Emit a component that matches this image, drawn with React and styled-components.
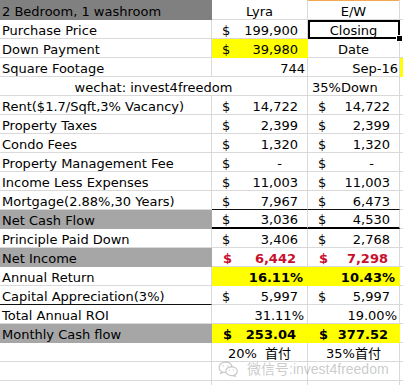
import React from 'react'
import styled, { createGlobalStyle } from 'styled-components'

const GRID = '#d9d9d9'
const YELLOW = '#ffff00'
const GREY = '#a6a6a6'
const DARK = '#808080'
const RED = '#c8102e'

const GlobalStyle = createGlobalStyle`
  html, body {
    margin: 0;
    padding: 0;
    background: #fff;
  }
  body {
    font-family: "DejaVu Sans", Verdana, "Noto Sans CJK SC", sans-serif;
  }
`

const Sheet = styled.div`
    position: relative;
    display: grid;
    grid-template-columns: 212px 96px 92px 3px;
    grid-template-rows: 20px;
    grid-auto-rows: 19px;
    width: 403px;
    height: 385px;
    overflow: hidden;
    font-size: 13px;
    color: #000;
`

const justify = {
    left: 'flex-start',
    center: 'center',
    right: 'flex-end',
    split: 'space-between',
}

const Cell = styled.div`
    position: relative;
    box-sizing: border-box;
    display: flex;
    align-items: flex-end;
    justify-content: ${p => justify[p.$align || 'right']};
    grid-column: span ${p => p.$span || 1};
    padding: 0 ${p => p.$pr ?? 2}px 0 ${p => p.$pl ?? 2}px;
    line-height: 14px;
    white-space: nowrap;
    background: ${p => p.$fill || '#fff'};
    border-right: 1px solid ${p => p.$fill || GRID};
    border-bottom: ${p =>
        p.$rule === 'thick' ? '2px solid #000'
        : p.$rule === 'thin' ? '1px solid #111'
        : `1px solid ${p.$fill || GRID}`};
    font-weight: ${p => (p.$bold ? 700 : 400)};
    color: ${p => (p.$red ? RED : '#000')};
`

const HeadCell = styled(Cell)`
    box-shadow: inset 0 1px 0 #f3a94f;
`

const Selected = styled(Cell)`
    &::after {
        content: '';
        position: absolute;
        top: 0;
        left: 0;
        right: -1px;
        bottom: -1px;
        border: 2px solid #000;
    }
    &::before {
        content: '';
        position: absolute;
        right: -4px;
        bottom: -4px;
        width: 5px;
        height: 5px;
        background: #000;
        border: 1px solid #fff;
        z-index: 1;
    }
`

const Edge = styled.div`
    box-sizing: border-box;
    background: ${p => p.$fill || '#fff'};
    border-bottom: 1px solid ${p => p.$fill || GRID};
`

const Amount = styled.span`
    padding-right: ${p => (p.$dash ? 16 : 0)}px;
`

const Money = ({ value, bold, ...rest }) => (
    <Cell $align="split" $pl={bold ? 11 : 10} $pr={bold ? 11 : 9} $bold={bold} {...rest}>
        <span>$</span>
        <Amount $dash={value === '-'}>{value}</Amount>
    </Cell>
)

const Line = ({ label, fill, rule, edge, children }) => (
    <>
        <Cell $align="left" $fill={fill} $rule={rule}>{label}</Cell>
        {children}
        <Edge $fill={edge} />
    </>
)

const Watermark = styled.div`
    position: absolute;
    left: 218px;
    top: 361px;
    display: flex;
    align-items: center;
    gap: 8px;
    font-family: "Liberation Sans", "Noto Sans CJK SC", sans-serif;
    font-size: 14px;
    line-height: 16px;
    color: rgba(120, 120, 120, 0.4);
    pointer-events: none;
`

const WeChatLogo = () => (
    <svg width="21" height="16" viewBox="0 0 21 16" fill="none" stroke="currentColor" strokeWidth="1.2">
        <path d="M14 5.6C13.4 3.1 10.8 1.2 7.6 1.2 4 1.2 1 3.5 1 6.4c0 1.6.9 3 2.4 3.9L2.8 12.3l2.4-1.2c.8.2 1.5.3 2.3.3" />
        <path d="M13.6 5.8c-3.2 0-5.8 2-5.8 4.4s2.6 4.4 5.8 4.4c.6 0 1.2-.1 1.8-.2l1.9 1-.5-1.6c1.5-.8 2.5-2.1 2.5-3.6 0-2.4-2.5-4.4-5.7-4.4z" />
        <circle cx="5.2" cy="4.9" r="0.7" fill="currentColor" stroke="none" />
        <circle cx="9.8" cy="4.9" r="0.7" fill="currentColor" stroke="none" />
        <circle cx="11.7" cy="9.2" r="0.6" fill="currentColor" stroke="none" />
        <circle cx="15.5" cy="9.2" r="0.6" fill="currentColor" stroke="none" />
    </svg>
)

const App = () => {
    return (
        <Sheet>
            <GlobalStyle />
            <Line label="2 Bedroom, 1 washroom" fill={DARK}>
                <Cell $align="center">Lyra</Cell>
                <HeadCell $align="center">E/W</HeadCell>
            </Line>
            <Line label="Purchase Price">
                <Money value="199,900" />
                <Selected $align="center">Closing</Selected>
            </Line>
            <Line label="Down Payment">
                <Money value="39,980" $fill={YELLOW} />
                <Cell $align="center">Date</Cell>
            </Line>
            <Line label="Square Footage" edge={YELLOW}>
                <Cell $pr={2}>744</Cell>
                <Cell $pr={1}>Sep-16</Cell>
            </Line>
            <>
                <Cell $align="center" $span={2}>wechat: invest4freedom</Cell>
                <Cell $align="left" $pl={4}>35%Down</Cell>
                <Edge />
            </>
            <Line label="Rent($1.7/Sqft,3% Vacancy)">
                <Money value="14,722" />
                <Money value="14,722" />
            </Line>
            <Line label="Property Taxes">
                <Money value="2,399" />
                <Money value="2,399" />
            </Line>
            <Line label="Condo Fees">
                <Money value="1,320" />
                <Money value="1,320" />
            </Line>
            <Line label="Property Management Fee">
                <Money value="-" />
                <Money value="-" />
            </Line>
            <Line label="Income Less Expenses">
                <Money value="11,003" />
                <Money value="11,003" />
            </Line>
            <Line label="Mortgage(2.88%,30 Years)">
                <Money value="7,967" $rule="thin" />
                <Money value="6,473" $rule="thin" />
            </Line>
            <Line label="Net Cash Flow" fill={GREY}>
                <Money value="3,036" $rule="thick" />
                <Money value="4,530" $rule="thick" />
            </Line>
            <Line label="Principle Paid Down">
                <Money value="3,406" />
                <Money value="2,768" />
            </Line>
            <Line label="Net Income" fill={GREY}>
                <Money value="6,442" bold $red />
                <Money value="7,298" bold $red />
            </Line>
            <Line label="Annual Return">
                <Cell $fill={YELLOW} $bold $pr={4}>16.11%</Cell>
                <Cell $fill={YELLOW} $bold $pr={4}>10.43%</Cell>
            </Line>
            <Line label="Capital Appreciation(3%)" rule="thin">
                <Money value="5,997" />
                <Money value="5,997" />
            </Line>
            <Line label="Total Annual ROI">
                <Cell $pr={3}>31.11%</Cell>
                <Cell $pr={2}>19.00%</Cell>
            </Line>
            <Line label="Monthly Cash flow" fill={GREY}>
                <Money value="253.04" bold $fill={YELLOW} />
                <Money value="377.52" bold $fill={YELLOW} />
            </Line>
            <Line label="">
                <Cell $align="center">20%&nbsp;&nbsp;首付</Cell>
                <Cell $align="center">35%首付</Cell>
            </Line>
            <Line label="">
                <Cell />
                <Cell />
            </Line>
            <Line label="">
                <Cell />
                <Cell />
            </Line>
            <Watermark>
                <WeChatLogo />
                <span>微信号:invest4freedom</span>
            </Watermark>
        </Sheet>
    )
}

export default App
